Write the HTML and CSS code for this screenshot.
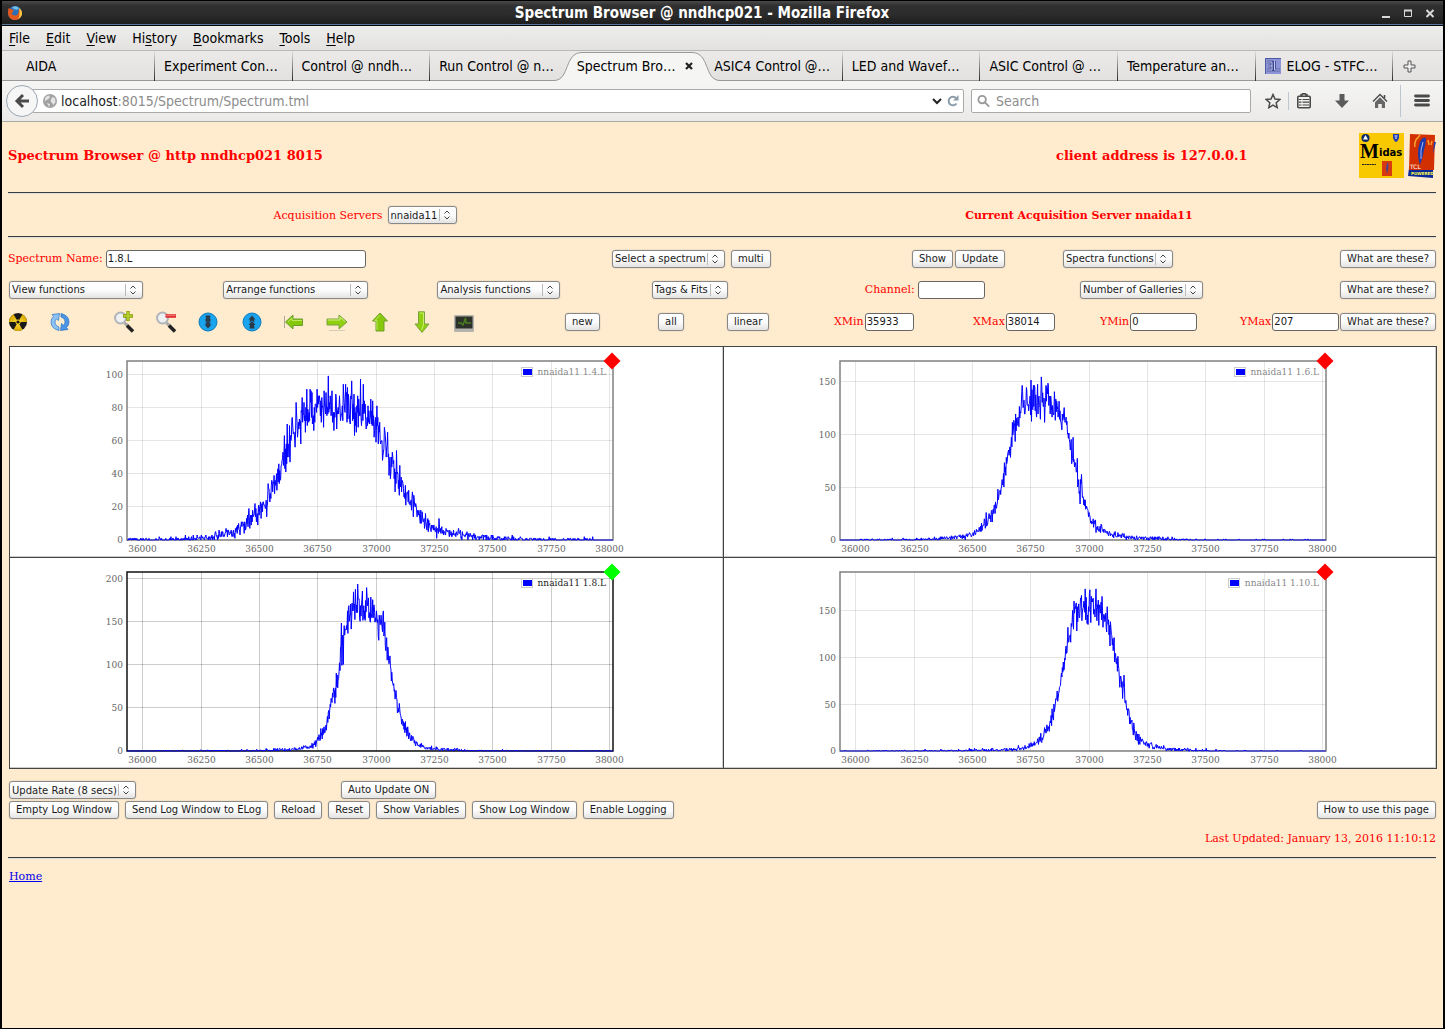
FILE: index.html
```html
<!DOCTYPE html>
<html lang="en">
<head>
  <meta charset="UTF-8">
  <title>Spectrum Browser @ nndhcp021</title>
  <link rel="stylesheet" href="styles.css">
</head>
<body>
<div class="window">

  <header class="titlebar">
    <svg class="firefox" viewBox="0 0 16 16" width="16" height="16">
      <circle cx="8" cy="8" r="7" fill="#2a6fb8"/>
      <path d="M5 2.500Q9 0 12 3L10 5 7 4z" fill="#6fc0ea"/>
      <path d="M1.500 3Q3 4 4 4L6.500 5 6 7 4.500 8Q5.500 10.500 8 10.500 11 10.500 11.500 7L12 3.500Q15 5 15 9 14 14.500 8 15 1.500 14.500 1 8.500 1 5 1.500 3z" fill="#e4581b"/>
      <path d="M12 3Q15.500 5.500 15 9.500 14 13 11 14.200 13.500 10 12 3z" fill="#ffc63a"/>
    </svg>
    <span class="title">Spectrum Browser @ nndhcp021 - Mozilla Firefox</span>
    <svg class="winbtns" viewBox="0 0 56 12" width="56" height="12" fill="none" stroke="#d8d8d8">
      <path d="M1 10h8" stroke-width="2"/>
      <path d="M23.500 3.500h7v6h-7z"/><path d="M23 3.500h8" stroke-width="2"/>
      <path d="M45.500 3l7 7M52.500 3l-7 7" stroke-width="2"/>
    </svg>
  </header>

  <nav class="menubar">
    <span><u>F</u>ile</span>
    <span><u>E</u>dit</span>
    <span><u>V</u>iew</span>
    <span>Hi<u>s</u>tory</span>
    <span><u>B</u>ookmarks</span>
    <span><u>T</u>ools</span>
    <span><u>H</u>elp</span>
  </nav>

  <div class="tabs">
    <div class="tab first">AIDA</div>
    <div class="tab">Experiment Con…</div>
    <div class="tab">Control @ nndh…</div>
    <div class="tab nosep">Run Control @ n…</div>
    <div class="tab nosep active">
      <svg class="tabshape" viewBox="0 0 166 30" width="166" height="30">
        <path d="M0 30V29.500C16 29.500 10 1.500 28 1.500H138C156 1.500 150 29.500 166 29.500V30z" fill="#f5f5f4"/>
        <path d="M0 29.500C16 29.500 10 1.500 28 1.500H138C156 1.500 150 29.500 166 29.500" fill="none" stroke="#999"/>
      </svg>
      <span>Spectrum Bro…</span>
      <svg class="tabclose" viewBox="0 0 8 8" width="8" height="8"><path d="M1 1l6 6M7 1l-6 6" stroke="#222" stroke-width="2.200"/></svg>
    </div>
    <div class="tab">ASIC4 Control @…</div>
    <div class="tab">LED and Wavef…</div>
    <div class="tab">ASIC Control @ …</div>
    <div class="tab">Temperature an…</div>
    <div class="tab">
      <svg viewBox="0 0 16 16" width="16" height="16"><path d="M0 0h16v16H0z" fill="#8c93d6"/><path d="M.5 16V.5H16" fill="none" stroke="#5058a0"/><path d="M2 4h5v8H2M3 8h4M9.500 3v9H15" fill="none" stroke="#3a438c" stroke-width="2.600"/><path d="M2 4h5v8H2M3 8h4M9.500 3v9H15" fill="none" stroke="#c5caf5"/></svg>
      <span>ELOG - STFC…</span>
    </div>
    <div class="newtab">
      <svg viewBox="0 0 13 13" width="13" height="13"><path d="M5 1h3v4h4v3H8v4H5V8H1V5h4z" fill="#eee" stroke="#555"/></svg>
    </div>
  </div>

  <div class="toolbar">
    <button class="back" type="button" aria-label="Back">
      <svg viewBox="0 0 16 16" width="16" height="16"><path d="M9 2L3 8l6 6M3.500 8H15" fill="none" stroke="#4a4a4a" stroke-width="3"/></svg>
    </button>
    <div class="urlbox">
      <svg viewBox="0 0 14 14" width="14" height="14"><circle cx="7" cy="7" r="7" fill="#a2a2a2"/><path d="M2 4Q4 1 6 1.500L7 3 5 5.500 3 6 2 8zM9 3l3 1 .5 4-2 3L9 9 7.500 7zM4 9l3 1-1 3z" fill="#e4e4e4"/></svg>
      <span class="url"><b>localhost</b>:8015/Spectrum/Spectrum.tml</span>
      <svg viewBox="0 0 12 12" width="12" height="12"><path d="M2 4l4 4 4-4" fill="none" stroke="#222" stroke-width="2"/></svg>
      <svg viewBox="0 0 12 12" width="12" height="12"><path d="M9 3A4.300 4.300 0 1 0 9.500 8.500" fill="none" stroke="#8c9cab" stroke-width="2"/><path d="M6 5.500h5.500V0z" fill="#8c9cab"/></svg>
    </div>
    <div class="searchbox">
      <svg viewBox="0 0 14 14" width="14" height="14" fill="none" stroke="#999" stroke-width="2"><circle cx="5.500" cy="5.500" r="4"/><path d="M8.500 8.500L13 13"/></svg>
      <input type="text" placeholder="Search" aria-label="Search">
    </div>
    <div class="toolicons">
      <svg viewBox="0 0 16 16" width="16" height="16"><path d="M8 1.500l2 4.500 4.800.5-3.600 3.300 1 4.800L8 12.200l-4.200 2.400 1-4.800L1.200 6.500 6 6z" fill="none" stroke="#4a4a4a" stroke-width="1.500"/></svg>
      <i class="short"></i>
      <svg viewBox="0 0 16 16" width="16" height="16" fill="none" stroke="#4a4a4a"><rect x="1.800" y="3.300" width="12.400" height="11.500" rx="1" stroke-width="1.600"/><path d="M5 3V1.800h1.500V.8h3v1H11V3" stroke-width="1.500"/><path d="M3 6.500h2.500M6.500 6.500H13M3 9.200h2.500M6.500 9.200H13M3 12h2.500M6.500 12H13" stroke-width="1.200"/></svg>
      <svg class="gap" viewBox="0 0 16 16" width="16" height="16"><path d="M5.500 1h5v6.500H15L8 15 1 7.500h4.500z" fill="#5a5a5a"/></svg>
      <svg class="gap" viewBox="0 0 16 16" width="16" height="16"><path d="M1 8.500l7-7 7 7" fill="none" stroke="#4a4a4a" stroke-width="1.400"/><path d="M3 9.200l5-5 5 5V15h-3.200v-4H6.200v4H3z" fill="#666"/><path d="M12.500 2v3" stroke="#4a4a4a" stroke-width="1.600"/></svg>
      <i class="long"></i>
      <svg viewBox="0 0 16 16" width="16" height="16"><path d="M1.500 3h13M1.500 7.500h13M1.500 12h13" stroke="#4a4a4a" stroke-width="2.800" stroke-linecap="round"/></svg>
    </div>
  </div>

  <main class="page">
    <div class="heading">
      <h1>Spectrum Browser @ http nndhcp021 8015</h1>
      <h1>client address is 127.0.0.1</h1>
      <div class="logos">
        <svg viewBox="0 0 45 45" width="45" height="45">
          <path d="M0 0h45v45H0z" fill="#f8c800"/>
          <circle cx="6.500" cy="5" r="4" fill="#0a2a6a"/><path d="M4 6.500L6.500 2 9 6.500z" fill="#fff"/>
          <path d="M34 1h6v4q-1 3-3 4-2-1-3-4z" fill="#2038b0"/><path d="M35.500 3h3M36 5h2" stroke="#fff"/>
          <text x="1" y="25" class="midas-m">M</text>
          <text x="20" y="23" class="midas-t">idas</text>
          <path d="M3 31.500h14" stroke="#222" stroke-dasharray="2 .5"/>
          <path d="M23 28h10v15H23z" fill="#d83a10"/><path d="M29 29q-3 5-1 11 2-4 1-11z" fill="#36489c"/>
        </svg>
        <svg viewBox="0 0 28 45" width="28" height="45">
          <path d="M1 35l4-2 20 1 0 11-25-2z" fill="#0a2a9a"/>
          <path d="M2 1l25 1-1 35H1z" fill="#d23000"/>
          <path d="M12 9q2-5 6-4 0 6-2 12-1 7-4 15-2-6-2-12 0-6 2-11z" fill="#1a3cb0"/><path d="M15 9q-3 8-2 17" stroke="#a8b8f0" fill="none"/>
          <path d="M9 5q-3 5-2 9M12 2L9 6M20 7l1 5M24 8l-1 4" stroke="#f5a030" stroke-width="1.500" fill="none"/>
          <path d="M26 9l2 0-3 12z" fill="#1a3cb0"/>
          <text x="2" y="36" class="tcl">TCL</text>
          <text x="3" y="42" class="powered">POWERED</text>
        </svg>
      </div>
    </div>
    <hr>

    <div class="servers">
      <div class="field"><label for="server">Acquisition Servers</label><select id="server"><option>nnaida11</option></select></div>
      <strong>Current Acquisition Server nnaida11</strong>
    </div>
    <hr>

    <div class="controls">
      <div class="row row-name">
        <div class="field"><label for="name">Spectrum Name:</label><input type="text" id="name" class="w-name" value="1.8.L"></div>
        <div class="group">
          <select aria-label="Select a spectrum"><option>Select a spectrum</option></select>
          <button type="button">multi</button>
        </div>
        <div class="group tight">
          <button type="button">Show</button>
          <button type="button">Update</button>
        </div>
        <div class="group"><select aria-label="Spectra functions"><option>Spectra functions</option></select></div>
        <button type="button" class="help">What are these?</button>
      </div>

      <div class="row row-func">
        <div class="group"><select class="w-view" aria-label="View functions"><option>View functions</option></select></div>
        <div class="group"><select class="w-arrange" aria-label="Arrange functions"><option>Arrange functions</option></select></div>
        <div class="group"><select class="w-analysis" aria-label="Analysis functions"><option>Analysis functions</option></select></div>
        <div class="group"><select aria-label="Tags and fits"><option>Tags &amp; Fits</option></select></div>
        <div class="field"><label for="channel">Channel:</label><input type="text" id="channel" class="w-mid"></div>
        <div class="group"><select aria-label="Number of Galleries"><option>Number of Galleries</option></select></div>
        <button type="button" class="help">What are these?</button>
      </div>

      <div class="row row-tools">
        <svg viewBox="0 0 20 20" width="20" height="20"><defs><radialGradient id="ry"><stop offset="0" stop-color="#ffe040"/><stop offset="1" stop-color="#d8a800"/></radialGradient></defs>
          <circle cx="10" cy="10" r="9" fill="#181818"/><path d="M10 10L1 10A9 9 0 0 1 5.500 2.200zM10 10L14.500 2.200A9 9 0 0 1 19 10zM10 10L14.500 17.800A9 9 0 0 1 5.500 17.800z" fill="url(#ry)"/><circle cx="10" cy="10" r="2.500" fill="#f0c820"/><circle cx="10" cy="10" r="1.600" fill="#181818"/></svg>
        <svg viewBox="0 0 20 20" width="20" height="20" stroke="#2a70c8" stroke-width=".7"><path d="M9 18.500Q1 16.500 1 10 1 6.500 3.500 4.500L2 2.500 9.500 1.500 8.500 8.500 6.500 6.800Q5 8 5 10.500 5 14 9 15z" fill="#8cc4f6"/><path d="M11 1.500Q19 3.500 19 10 19 13.500 16.500 15.500L18 17.500 10.500 18.500 11.500 11.500 13.500 13.200Q15 12 15 9.500 15 6 11 5z" fill="#4a96e4"/></svg>
        <svg viewBox="0 0 22 22" width="22" height="22"><circle cx="7.500" cy="7" r="5.500" fill="#eef0f4" stroke="#b0b4b8" stroke-width="2"/><path d="M11.500 12l3 2.500" stroke="#aaa" stroke-width="3"/><path d="M14 14.500l6 6" stroke="#222" stroke-width="3.600"/><path d="M15 0v10M10 5h10" stroke="#8a9c10" stroke-width="3.400"/><path d="M15 .8v8.400M10.800 5h8.400" stroke="#b8d82a" stroke-width="1.600"/></svg>
        <svg viewBox="0 0 22 22" width="22" height="22"><circle cx="7.500" cy="7" r="5.500" fill="#eef0f4" stroke="#b0b4b8" stroke-width="2"/><path d="M11.500 12l3 2.500" stroke="#aaa" stroke-width="3"/><path d="M14 14.500l6 6" stroke="#222" stroke-width="3.600"/><path d="M10.500 5h10.500" stroke="#e03030" stroke-width="3.600"/><path d="M11 4.500h9.500" stroke="#f07070"/></svg>
        <svg viewBox="0 0 20 20" width="20" height="20"><circle cx="10" cy="10" r="9" fill="#1aa4ee" stroke="#0c7cc0"/><path d="M7.500 3.500h5l-.7 4h1.700L10 11.500 6.500 7.500h1.700zM7.500 9.500l2.500 2 2.500-2-.5 3h1.500L10 16.500 6.500 12.500H8z" fill="#2a3a48"/></svg>
        <svg viewBox="0 0 20 20" width="20" height="20"><circle cx="10" cy="10" r="9" fill="#1aa4ee" stroke="#0c7cc0"/><path d="M10 3.500L13.500 7.500H12l.5 3-2.500-2-2.500 2 .5-3H6.500zM10 9l3.500 4H12l.5 3.500h-5L8 13H6.500z" fill="#2a3a48"/></svg>
        <svg viewBox="0 0 20 20" width="20" height="20"><path d="M1.500 10L9 3v4h9.500v6.500H9V17z" fill="#86c80c" stroke="#6a9c30"/><path d="M4 10l4-4v2.500h10" fill="none" stroke="#c0e860"/><path d="M.5 4v12" stroke="#998" stroke-width=".8"/></svg>
        <svg viewBox="0 0 22 20" width="22" height="20"><path d="M21 10l-8-7v4H1v6h12v4z" fill="#90d010" stroke="#7aa040"/><path d="M1.800 8H14V5l5 4.500" fill="none" stroke="#d0f080"/><path d="M3 18.500h16" stroke="#d8cdb4"/></svg>
        <svg viewBox="0 0 20 20" width="20" height="20"><path d="M10 1l7.500 8H14v10H6V9H2.500z" fill="#86c80c" stroke="#6fa02a"/><path d="M7 18V8.500H5L10 3" fill="none" stroke="#c0e860"/></svg>
        <svg viewBox="0 0 20 22" width="20" height="22"><path d="M10 21.500l-7-8.500h3.500V.8h6V13H17z" fill="#90d010" stroke="#7aa040"/><path d="M7.500 2h4v12l-2 5" fill="none" stroke="#c8ee70"/></svg>
        <svg viewBox="0 0 20 20" width="20" height="20"><rect x="0" y="3" width="20" height="17" rx="1" fill="#b4b4ac"/><path d="M1.500 4.500h17v12h-17z" fill="#2c322a"/><path d="M4 11h3l2 2 2.500-7 .5 5h5" fill="none" stroke="#4c7c20" stroke-width="1.500"/></svg>
        <div class="group"><button type="button">new</button></div>
        <div class="group"><button type="button">all</button></div>
        <div class="group"><button type="button">linear</button></div>
        <div class="field"><label for="xmin">XMin</label><input type="text" id="xmin" class="w-small" value="35933"></div>
        <div class="field"><label for="xmax">XMax</label><input type="text" id="xmax" class="w-small" value="38014"></div>
        <div class="field"><label for="ymin">YMin</label><input type="text" id="ymin" class="w-mid" value="0"></div>
        <div class="field"><label for="ymax">YMax</label><input type="text" id="ymax" class="w-mid" value="207"></div>
        <button type="button" class="help">What are these?</button>
      </div>
    </div>

    <div class="gallery" id="gallery"></div>

    <div class="update">
      <div class="group"><select aria-label="Update rate"><option>Update Rate (8 secs)</option></select></div>
      <div class="group"><button type="button">Auto Update ON</button></div>
    </div>
    <div class="logging">
      <button type="button">Empty Log Window</button>
      <button type="button">Send Log Window to ELog</button>
      <button type="button">Reload</button>
      <button type="button">Reset</button>
      <button type="button">Show Variables</button>
      <button type="button">Show Log Window</button>
      <button type="button">Enable Logging</button>
      <button type="button" class="help">How to use this page</button>
    </div>
    <p class="updated">Last Updated: January 13, 2016 11:10:12</p>
    <hr>
    <p class="home"><a href="#">Home</a></p>
  </main>
</div>
<script src="spectra.js"></script>
</body>
</html>
```
FILE: styles.css
```css
* {
  box-sizing: border-box;
}
body {
  margin: 0;
  background: #000;
  font-family: "DejaVu Sans", sans-serif;
}
.window {
  display: flex;
  flex-direction: column;
  min-height: 100vh;
  border: 2px solid #000;
  border-top-width: 1px;
  border-bottom-width: 1px;
}

/* browser chrome */
.titlebar {
  display: flex;
  align-items: center;
  height: 25px;
  padding: 0 6px 0 5px;
  background: linear-gradient(#4a4a4a, #303030 20%, #2c2c2c 55%, #1c1c1c);
  border-bottom: 1px solid #000;
  box-shadow: inset 0 -1px #56789f;
  color: #fff;
}
.title {
  flex: 1;
  text-align: center;
  font-family: "DejaVu Sans Condensed", "DejaVu Sans", sans-serif;
  font-size: 15px;
  font-weight: bold;
}
.menubar {
  display: flex;
  align-items: center;
  gap: 16px;
  height: 25px;
  padding: 0 7px;
  background: linear-gradient(#ededec, #e3e2e0);
  border-bottom: 1px solid #b8b8b6;
  font-family: "DejaVu Sans Condensed", "DejaVu Sans", sans-serif;
  font-size: 14px;
}
.menubar u {
  text-underline-offset: 2px;
}
.tabs {
  display: flex;
  height: 30px;
  background: linear-gradient(#ebeae9, #e2e1df);
  box-shadow: inset 0 -1px #999;
  font-family: "DejaVu Sans Condensed", "DejaVu Sans", sans-serif;
  font-size: 14px;
}
.tab {
  position: relative;
  display: flex;
  flex: 1;
  align-items: center;
  gap: 6px;
  padding-left: 9px;
  white-space: nowrap;
  border-right: 1px solid transparent;
  border-image: linear-gradient(#e8e8e8, #222) 1;
}
.tab.first {
  flex: 0 0 153px;
  padding-left: 24px;
}
.tab.nosep {
  border-image: none;
}
.tab.active span,
.tab.active .tabclose {
  position: relative;
}
.tabshape {
  position: absolute;
  left: -14px;
  top: 0;
}
.tabclose {
  margin-left: 3px;
}
.newtab {
  display: flex;
  flex: 0 0 50px;
  align-items: center;
  padding-left: 10px;
}
.toolbar {
  display: flex;
  align-items: center;
  height: 41px;
  padding: 0 13px 0 4px;
  background: linear-gradient(#f5f5f4, #ebeae9);
  border-bottom: 1px solid #a8a8a4;
  font-family: "DejaVu Sans Condensed", "DejaVu Sans", sans-serif;
  font-size: 14px;
}
.toolbar .back {
  z-index: 1;
  display: flex;
  align-items: center;
  justify-content: center;
  width: 32px;
  height: 32px;
  padding: 0;
  border: 1px solid #9aa6b2;
  border-radius: 50%;
  background: #f6f6f6;
}
.urlbox,
.searchbox {
  display: flex;
  align-items: center;
  height: 24px;
  background: #fff;
  border: 1px solid #aaa;
  border-radius: 2px;
}
.urlbox {
  flex: 1;
  gap: 4px;
  margin-left: -6px;
  padding: 0 4px 0 10px;
}
.url {
  flex: 1;
  color: #8c8c8c;
}
.url b {
  color: #222;
  font-weight: normal;
}
.searchbox {
  flex: 0 0 280px;
  gap: 6px;
  margin-left: 7px;
  padding-left: 5px;
}
.searchbox input {
  width: 100%;
  height: 20px;
  padding: 0;
  border: 0;
  background: none;
  font: inherit;
}
.searchbox input::placeholder {
  color: #8c8c8c;
}
.toolicons {
  display: flex;
  align-items: center;
  gap: 7px;
  margin-left: 14px;
}
.toolicons i {
  width: 1px;
  background: #bcc6d0;
}
.toolicons .short {
  height: 18px;
}
.toolicons .long {
  height: 32px;
  margin: 0 6px 0 5px;
}
.toolicons .gap {
  margin-left: 15px;
}

/* page */
.page {
  flex: 1;
  padding: 0 7px 0 6px;
  background: #ffebcd;
  color: #f00;
  font-family: "DejaVu Serif", serif;
  font-size: 11px;
}
hr {
  height: 2px;
  margin: 0;
  border: 0;
  background: #ddd;
  border-top: 1px solid #3c3c3c;
}
.heading {
  display: grid;
  grid-template-columns: 1048fr 303fr 77px;
  align-items: center;
  padding: 11px 0 14px;
}
h1 {
  margin: 0;
  font-size: 13px;
}
.logos {
  display: flex;
  gap: 4px;
}
.midas-m {
  font: bold 20px "Liberation Serif", serif;
}
.midas-t {
  font: bold 10px "DejaVu Sans", sans-serif;
}
.tcl {
  fill: #fff;
  font: 6px "DejaVu Sans", sans-serif;
}
.powered {
  fill: #ff4;
  font: bold 4px "DejaVu Sans", sans-serif;
}
.servers {
  display: grid;
  grid-template-columns: 1fr 1fr;
  align-items: center;
  height: 42px;
  text-align: center;
}
.servers .field {
  justify-content: center;
  gap: 5px;
}
.controls {
  padding: 5px 0 8px;
}
.row {
  display: grid;
  align-items: center;
  height: 31px;
  white-space: nowrap;
}
.row > * {
  min-width: 0;
}
.row-name {
  grid-template-columns: 603fr 301fr 150fr 278fr 96px;
}
.row-func {
  grid-template-columns: repeat(5, 15%) 1fr 96px;
}
.row-tools {
  grid-template-columns: 42fr 63fr 42fr 43fr 44fr 42fr 42fr 44fr 42fr 42fr 111fr 93fr 69fr 107fr 139fr 127fr 140fr 100fr 96px;
  height: 33px;
}
.field,
.group {
  display: flex;
  align-items: center;
}
.field {
  gap: 3px;
}
.row-tools .field {
  gap: 1px;
}
.group {
  gap: 6px;
}
.group.tight {
  gap: 2px;
}
button,
select,
input {
  font-family: "DejaVu Sans", sans-serif;
  font-size: 10px;
  color: #1a1a1a;
}
.page button,
.page select {
  height: 18px;
  border: 1px solid #888;
  border-radius: 3px;
  background: linear-gradient(#fff, #fcfcfc 50%, #e4e3e2);
  box-shadow: 0 0 1px #889;
}
.page button {
  padding: 0 6px;
  line-height: 14px;
}
.page select {
  appearance: none;
  padding: 0 18px 0 2px;
  background:
    url("data:image/svg+xml,%3Csvg xmlns='http://www.w3.org/2000/svg' width='17' height='14'%3E%3Cpath d='M.5 1v12' stroke='%23bbb'/%3E%3Cpath d='M5.500 5.500L8 3l2.500 2.500M5.500 8.500L8 11l2.500-2.500' fill='none' stroke='%23444'/%3E%3C/svg%3E") right center no-repeat,
    linear-gradient(#fff, #fcfcfc 50%, #e4e3e2);
}
.page input {
  height: 18px;
  padding: 0 1px;
  border: 1px solid #666;
  border-radius: 3px;
  background: #fff;
}
.row select,
.update select {
  margin-left: 1px;
}
.help {
  justify-self: end;
}
.w-name {
  width: 260px;
}
.w-small {
  width: 49px;
}
.w-mid {
  width: 67px;
}
.w-view {
  width: 134px;
}
.w-arrange {
  width: 145px;
}
.w-analysis {
  width: 123px;
}

/* spectra */
.gallery {
  display: grid;
  grid-template-columns: 1fr 1fr;
  gap: 1px;
  margin: 0 -1px 0 1px;
  padding: 1px;
  background: #444;
}
.cell {
  display: flex;
  justify-content: center;
  height: 210px;
  background: #fff;
  border-right: 1px solid #ccc;
  border-bottom: 1px solid #ccc;
}
.chart {
  flex: none;
}
.chart text {
  font-family: "DejaVu Serif", serif;
  font-size: 9px;
  fill: #666;
}
.chart .grid {
  stroke: rgba(0, 0, 0, 0.1);
  fill: none;
}
.chart .frame {
  fill: none;
  stroke: #808080;
  stroke-width: 1.5;
}
.chart .trace {
  fill: none;
  stroke: #00f;
}
.chart .legend {
  fill: #888;
}
.chart .swatch {
  fill: #00f;
}
.chart .swatchbox {
  fill: #fff;
  stroke: #ccc;
}
.chart .marker {
  fill: #f00;
}
.chart.selected .grid {
  stroke: rgba(0, 0, 0, 0.2);
}
.chart.selected .frame {
  stroke: #111;
}
.chart.selected .legend {
  fill: #222;
}
.chart.selected .marker {
  fill: #0f0;
}

/* footer */
.update {
  display: grid;
  grid-template-columns: 333fr 1095fr;
  align-items: center;
  padding-top: 12px;
}
.logging {
  display: flex;
  gap: 6px;
  padding: 2px 0 0 1px;
}
.logging .help {
  margin-left: auto;
}
.updated {
  margin: 0;
  padding: 12px 0 10px;
  line-height: 16px;
  text-align: right;
}
.home {
  margin: 0;
  padding: 10px 1px;
  line-height: 16px;
}
.home a {
  color: #00e;
}
```
FILE: spectra.js
```js
const X0 = 35933;
const XMAX = 38014;

// means: [channel, mean counts], peaks: [channel, counts]
const spectra = [
  {
    name: "nnaida11 1.4.L", top: 108, step: 20, seed: 7,
    means: [[35933, 0.2], [36145, 0.5], [36248, 1.2], [36308, 2], [36367, 4], [36411, 6], [36456, 12], [36500, 17], [36530, 22], [36559, 32], [36589, 40], [36618, 55], [36648, 64], [36678, 72], [36722, 77], [36796, 80], [36885, 80], [36959, 75], [37003, 68], [37033, 58], [37062, 48], [37092, 38], [37121, 29], [37151, 24], [37181, 15], [37210, 10], [37255, 6], [37314, 4], [37388, 2.5], [37477, 1.5], [37551, 0.7], [37698, 0.3], [38014, 0.1]],
    peaks: [[36620, 70], [36717, 91], [36748, 91], [36796, 99], [36860, 94], [36933, 97], [37088, 54], [36456, 19], [37269, 13]]
  },
  {
    name: "nnaida11 1.6.L", top: 169, step: 50, seed: 21,
    means: [[35933, 0.05], [36255, 0.4], [36394, 2], [36463, 3.5], [36514, 7], [36549, 13], [36583, 24], [36601, 36], [36621, 48], [36635, 60], [36661, 85], [36678, 100], [36696, 112], [36713, 125], [36756, 130], [36794, 132], [36842, 125], [36877, 118], [36903, 108], [36920, 88], [36937, 75], [36955, 55], [36972, 42], [36989, 32], [37006, 20], [37032, 13], [37067, 8], [37118, 4], [37205, 2], [37377, 0.5], [37464, 0.1], [38014, 0.02]],
    peaks: [[36671, 111], [36714, 146], [36751, 151], [36795, 154], [36931, 97], [36967, 62]]
  },
  {
    name: "nnaida11 1.8.L", top: 207, step: 50, seed: 33, selected: true,
    means: [[35933, 0.01], [36441, 0.3], [36633, 1.5], [36722, 5], [36752, 14], [36781, 25], [36796, 42], [36811, 58], [36826, 72], [36840, 92], [36851, 118], [36870, 142], [36885, 155], [36907, 165], [36959, 166], [36981, 163], [37011, 152], [37033, 138], [37045, 122], [37058, 102], [37071, 78], [37084, 62], [37096, 47], [37114, 32], [37129, 22], [37151, 15], [37173, 10], [37210, 4], [37270, 2], [37403, 0.4], [37551, 0.1], [38014, 0.01]],
    peaks: [[36829, 90], [36851, 148], [36860, 100], [36942, 185], [36960, 189]]
  },
  {
    name: "nnaida11 1.10.L", top: 191, step: 50, seed: 58,
    means: [[35933, 0.01], [36392, 0.3], [36672, 1.5], [36752, 5], [36792, 12], [36822, 24], [36842, 38], [36862, 58], [36882, 80], [36902, 108], [36922, 132], [36942, 146], [36972, 152], [37032, 153], [37062, 144], [37092, 130], [37108, 110], [37128, 84], [37148, 62], [37164, 42], [37182, 28], [37202, 17], [37232, 10], [37272, 5], [37352, 2], [37492, 0.3], [37700, 0.05], [38014, 0.01]],
    peaks: [[36936, 160], [36968, 166], [37004, 172], [37030, 173], [37056, 165], [37150, 81]]
  }
];

const LEFT = 31, RIGHT = 517, TOP = 14, BOTTOM = 193;
const BIN = 2;

function random(seed) {
  let s = seed;
  return () => {
    s = (s * 16807) % 2147483647;
    return s / 2147483647;
  };
}

function meanAt(means, ch) {
  for (let i = 1; i < means.length; i++) {
    if (ch <= means[i][0]) {
      const [x0, y0] = means[i - 1];
      const [x1, y1] = means[i];
      return y0 + (y1 - y0) * (ch - x0) / (x1 - x0);
    }
  }
  return 0;
}

// counting statistics: Poisson for low counts, gaussian above
function counts(mean, rnd) {
  if (mean < 2) {
    const limit = Math.exp(-mean);
    let k = 0, p = rnd();
    while (p > limit && k < 3) {
      p *= rnd();
      k++;
    }
    return k;
  }
  const g = rnd() + rnd() + rnd() + rnd() + rnd() + rnd() - 3;
  return Math.max(0, Math.round(mean + g * 1.1 * Math.sqrt(mean)));
}

function draw(s) {
  const x = ch => LEFT + (ch - X0) / (XMAX - X0) * (RIGHT - LEFT);
  const y = n => BOTTOM - n / s.top * (BOTTOM - TOP);
  const rnd = random(s.seed * 7919);
  // snap the peaks to the start of their bin
  const peaks = new Map(s.peaks.map(([ch, n]) => [ch - (ch - X0) % BIN, n]));

  let trace = "";
  for (let ch = X0; ch <= XMAX; ch += BIN) {
    const n = peaks.get(ch) ?? counts(meanAt(s.means, ch), rnd);
    trace += (trace ? "L" : "M") + x(ch).toFixed(1) + " " + y(n).toFixed(1);
  }

  let grid = "", labels = "";
  for (let ch = 36000; ch <= 38000; ch += 250) {
    const px = Math.floor(x(ch)) + 0.5;
    grid += `M${px} ${TOP}V${BOTTOM}`;
    labels += `<text x="${px}" y="205" text-anchor="middle">${ch}</text>`;
  }
  for (let n = 0; n <= s.top; n += s.step) {
    const py = Math.ceil(y(n)) - 0.5;
    grid += `M${LEFT} ${py}H${RIGHT}`;
    labels += `<text x="27" y="${py + 3}" text-anchor="end">${n}</text>`;
  }
  const swatch = s.name.length > 14 ? 420 : 426;

  return `
    <div class="cell">
      <svg class="chart${s.selected ? " selected" : ""}" viewBox="0 0 540 209" width="540" height="209">
        <path class="grid" d="${grid}"/>
        ${labels}
        <rect class="frame" x="31" y="14" width="486" height="179"/>
        <path class="trace" d="${trace}"/>
        <rect class="swatchbox" x="${swatch - 0.5}" y="20.500" width="11" height="9"/>
        <rect class="swatch" x="${swatch + 1}" y="22" width="9" height="6"/>
        <text class="legend" x="510" y="28" text-anchor="end">${s.name}</text>
        <path class="marker" d="M516 5.500l8.500 8.500-8.500 8.500-8.500-8.500z"/>
      </svg>
    </div>`;
}

document.getElementById("gallery").innerHTML = spectra.map(draw).join("");
```
